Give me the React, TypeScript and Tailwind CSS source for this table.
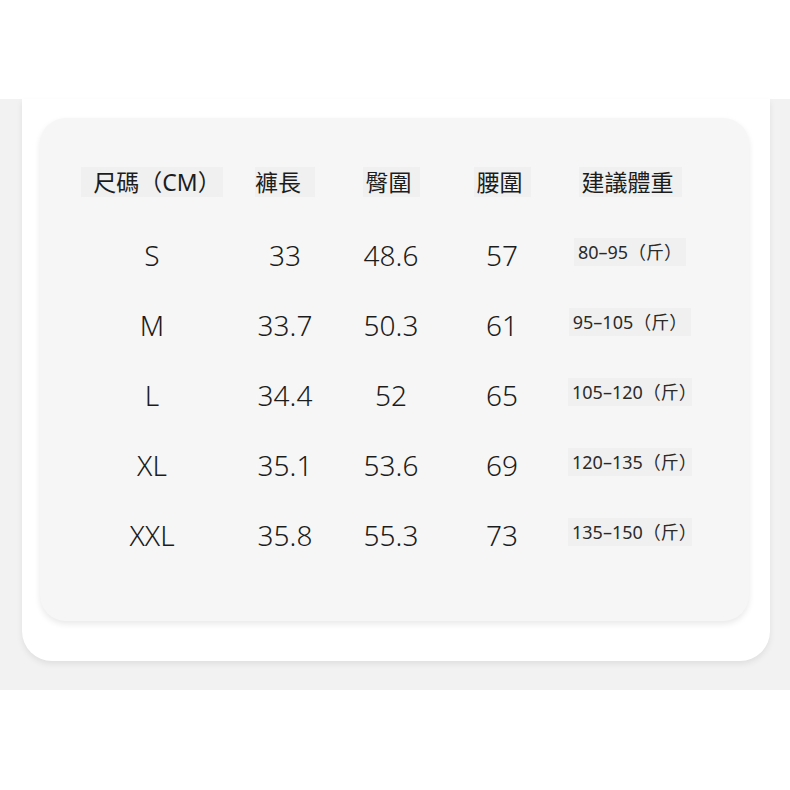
import React from 'react';

const font = { fontFamily: '"Noto Sans", "Noto Sans CJK TC", sans-serif' };

const headers = [
    { label: '尺碼（CM）', pad: 'pl-[12px] pr-[2px]' },
    { label: '褲長', pad: 'pl-[0px] pr-[14px]' },
    { label: '臀圍', pad: 'pl-[3px] pr-[8px]' },
    { label: '腰圍', pad: 'pl-[3px] pr-[8px]' },
    { label: '建議體重', pad: 'pl-[3px] pr-[8px]' },
];

const rows = [
    { size: 'S', length: '33', hip: '48.6', waist: '57', weight: '80–95（斤）' },
    { size: 'M', length: '33.7', hip: '50.3', waist: '61', weight: '95–105（斤）' },
    { size: 'L', length: '34.4', hip: '52', waist: '65', weight: '105–120（斤）' },
    { size: 'XL', length: '35.1', hip: '53.6', waist: '69', weight: '120–135（斤）' },
    { size: 'XXL', length: '35.8', hip: '55.3', waist: '73', weight: '135–150（斤）' },
];

// column widths so the centres land where the chart has them
const cols = ['w-[144px]', 'w-[122px]', 'w-[90px]', 'w-[132px]', 'w-[124px]'];

const App: React.FC = () => {
    return (
        <div className="w-[790px] h-[790px] bg-white" style={font}>
            <div className="h-[99px]" />
            <div className="h-[591px] bg-[#f2f2f2] pl-[22px] pr-[20px]">
                <div className="h-[562px] bg-white rounded-b-[30px] shadow-[0_3px_6px_rgba(0,0,0,0.08)] pt-[19px] pl-[18px] flex flex-col">
                    <div className="w-[709px] h-[503px] bg-[#f6f6f6] rounded-[26px] shadow-[0_3px_6px_rgba(0,0,0,0.09)] pl-[40px] pt-[42px] flex flex-col">
                        {/* header */}
                        <div className="flex h-[44px] items-center">
                            {headers.map((h, i) => (
                                <div key={h.label} className={`${cols[i]} flex justify-center`}>
                                    <span className={`bg-[#f0f0f0] ${h.pad} py-[1px] text-[23px] leading-[28px] text-[#1c1c1c]`}>
                                        {h.label}
                                    </span>
                                </div>
                            ))}
                        </div>

                        {/* rows */}
                        <div className="mt-[16px]">
                            {rows.map(r => (
                                <div key={r.size} className="flex h-[70px] items-center text-[28px] text-[#1c1c1c] font-light">
                                    <div className={`${cols[0]} text-center`}>{r.size}</div>
                                    <div className={`${cols[1]} text-center`}>{r.length}</div>
                                    <div className={`${cols[2]} text-center`}>{r.hip}</div>
                                    <div className={`${cols[3]} text-center`}>{r.waist}</div>
                                    <div className={`${cols[4]} flex justify-center -mt-[6px]`}>
                                        <span className="bg-[#f0f0f0] px-[4px] py-[3px] text-[18px] leading-[22px] font-normal text-[#2a2a2a]">
                                            {r.weight}
                                        </span>
                                    </div>
                                </div>
                            ))}
                        </div>
                    </div>
                </div>
            </div>
        </div>
    );
};

export default App;
